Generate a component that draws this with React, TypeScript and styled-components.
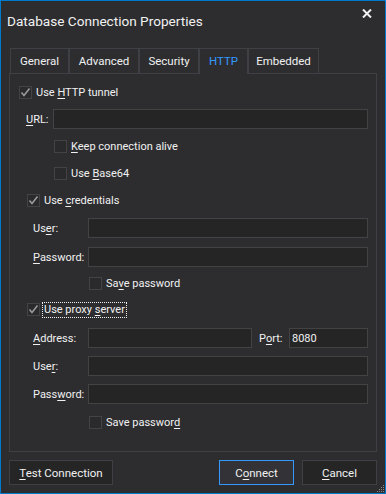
import React, { useState } from "react";
import styled, { createGlobalStyle } from "styled-components";

const GlobalStyle = createGlobalStyle`
  html, body {
    margin: 0;
    padding: 0;
    background: #2d2d30;
  }
  body {
    font-family: Roboto, "Noto Sans", sans-serif;
  }
`;

const Window = styled.div`
  position: relative;
  box-sizing: border-box;
  width: 386px;
  height: 494px;
  border: 1px solid #007acc;
  background: #2d2d30;
  color: #f1f1f1;
  font-size: 11px;
  display: flex;
  flex-direction: column;
`;

const TitleBar = styled.div`
  height: 40px;
  display: flex;
  justify-content: space-between;
  padding: 0 13px 0 6px;
`;

const Title = styled.span`
  font-size: 13.6px;
  line-height: 40px;
`;

const CloseButton = styled.div`
  margin-top: 8px;
  width: 10px;
  height: 9px;
  display: flex;
`;

const TabStrip = styled.div`
  display: flex;
  height: 25px;
  margin: 7px 8px 0;
  padding-left: 1px;
`;

const Tab = styled.div<{ $width: number; $active?: boolean }>`
  position: relative;
  z-index: 1;
  box-sizing: border-box;
  width: ${(p) => p.$width}px;
  height: ${(p) => (p.$active ? 26 : 25)}px;
  margin-bottom: ${(p) => (p.$active ? -1 : 0)}px;
  border: 1px solid #3f3f46;
  border-bottom: none;
  background: #2d2d30;
  color: ${(p) => (p.$active ? "#3399ff" : "#f1f1f1")};
  font-size: 11.5px;
  display: flex;
  align-items: center;
  justify-content: center;
  padding-bottom: ${(p) => (p.$active ? 1 : 0)}px;
  cursor: default;
`;

const Panel = styled.div`
  box-sizing: border-box;
  height: 379px;
  margin: 0 8px;
  border: 1px solid #3f3f46;
  padding: 12px 8px 0 9px;
  display: flex;
  flex-direction: column;
`;

const CheckRow = styled.label<{ $mt: number; $indent: number }>`
  display: flex;
  align-items: center;
  height: 13px;
  margin-top: ${(p) => p.$mt}px;
  margin-left: ${(p) => p.$indent}px;
  gap: 3px;
`;

const Box = styled.span`
  box-sizing: border-box;
  width: 13px;
  height: 13px;
  border: 1px solid #434346;
  background: #2a2a2c;
  display: flex;
  align-items: center;
  justify-content: center;
`;

const CheckText = styled.span<{ $focused?: boolean }>`
  line-height: 14px;
  padding: 0 1px;
  white-space: nowrap;
  outline: ${(p) => (p.$focused ? "1px dotted #f1f1f1" : "none")};
`;

const FieldRow = styled.div<{ $mt: number; $indent: number }>`
  display: flex;
  align-items: center;
  height: 20px;
  margin-top: ${(p) => p.$mt}px;
  margin-left: ${(p) => p.$indent}px;
`;

const FieldLabel = styled.span<{ $width: number }>`
  width: ${(p) => p.$width}px;
  flex-shrink: 0;
  white-space: nowrap;
`;

const Input = styled.input<{ $width?: number }>`
  box-sizing: border-box;
  height: 20px;
  ${(p) => (p.$width ? `width: ${p.$width}px; flex: none;` : "flex: 1; min-width: 0;")}
  background: #252526;
  border: 1px solid #434346;
  color: #f1f1f1;
  font-family: inherit;
  font-size: 11px;
  padding: 0 2px;
  margin: 0;
  outline: none;
`;

const Gap = styled.span<{ $width: number }>`
  width: ${(p) => p.$width}px;
  flex-shrink: 0;
`;

const Footer = styled.div`
  display: flex;
  gap: 8px;
  height: 25px;
  margin: 8px 8px 0;
`;

const Spacer = styled.div`
  flex: 1;
`;

const Button = styled.button<{ $width: number; $primary?: boolean }>`
  box-sizing: border-box;
  width: ${(p) => p.$width}px;
  height: 25px;
  background: ${(p) => (p.$primary ? "#333337" : "#252526")};
  border: 1px solid ${(p) => (p.$primary ? "#3399ff" : "#3f3f46")};
  color: #f1f1f1;
  font-family: inherit;
  font-size: 11.5px;
  padding: 0;
  cursor: pointer;
`;

const Grip = styled.svg`
  position: absolute;
  right: 0;
  bottom: 0;
`;

const U = styled.u`
  text-decoration: underline;
  text-underline-offset: 2px;
`;

const Check = ({ checked }: { checked: boolean }) => (
  <Box>
    {checked && (
      <svg width="11" height="11" viewBox="0 0 11 11">
        <polyline
          points="1.5,5.5 4,8.5 9.5,1.5"
          fill="none"
          stroke="#9a9a9a"
          strokeWidth="1.6"
        />
      </svg>
    )}
  </Box>
);

const tabs = [
  { name: "General", width: 59 },
  { name: "Advanced", width: 70 },
  { name: "Security", width: 60 },
  { name: "HTTP", width: 49 },
  { name: "Embedded", width: 71 },
];

export default function App() {
  const [active, setActive] = useState("HTTP");

  return (
    <>
      <GlobalStyle />
      <Window>
        <TitleBar>
          <Title>Database Connection Properties</Title>
          <CloseButton>
            <svg width="10" height="9" viewBox="0 0 10 9">
              <path d="M1 0.5 L9 8.5 M9 0.5 L1 8.5" stroke="#f1f1f1" strokeWidth="2" />
            </svg>
          </CloseButton>
        </TitleBar>

        <TabStrip>
          {tabs.map((t) => (
            <Tab
              key={t.name}
              $width={t.width}
              $active={active === t.name}
              onClick={() => setActive(t.name)}
            >
              {t.name}
            </Tab>
          ))}
        </TabStrip>

        <Panel>
          <CheckRow $mt={0} $indent={0}>
            <Check checked />
            <CheckText>
              Use <U>H</U>TTP tunnel
            </CheckText>
          </CheckRow>
          <FieldRow $mt={10} $indent={7}>
            <FieldLabel $width={27}>
              <U>U</U>RL:
            </FieldLabel>
            <Input />
          </FieldRow>
          <CheckRow $mt={11} $indent={35}>
            <Check checked={false} />
            <CheckText>
              <U>K</U>eep connection alive
            </CheckText>
          </CheckRow>
          <CheckRow $mt={14} $indent={35}>
            <Check checked={false} />
            <CheckText>
              Use <U>B</U>ase64
            </CheckText>
          </CheckRow>

          <CheckRow $mt={14} $indent={8}>
            <Check checked />
            <CheckText>
              Use <U>c</U>redentials
            </CheckText>
          </CheckRow>
          <FieldRow $mt={11} $indent={14}>
            <FieldLabel $width={55}>
              Us<U>e</U>r:
            </FieldLabel>
            <Input />
          </FieldRow>
          <FieldRow $mt={9} $indent={14}>
            <FieldLabel $width={55}>
              <U>P</U>assword:
            </FieldLabel>
            <Input type="password" />
          </FieldRow>
          <CheckRow $mt={10} $indent={70}>
            <Check checked={false} />
            <CheckText>
              Sa<U>v</U>e password
            </CheckText>
          </CheckRow>

          <CheckRow $mt={13} $indent={8}>
            <Check checked />
            <CheckText $focused>
              Use proxy <U>s</U>erver
            </CheckText>
          </CheckRow>
          <FieldRow $mt={12} $indent={14}>
            <FieldLabel $width={55}>
              <U>A</U>ddress:
            </FieldLabel>
            <Input $width={164} />
            <Gap $width={7} />
            <FieldLabel $width={30}>
              P<U>o</U>rt:
            </FieldLabel>
            <Input defaultValue="8080" />
          </FieldRow>
          <FieldRow $mt={8} $indent={14}>
            <FieldLabel $width={55}>
              Use<U>r</U>:
            </FieldLabel>
            <Input />
          </FieldRow>
          <FieldRow $mt={8} $indent={14}>
            <FieldLabel $width={55}>
              Pass<U>w</U>ord:
            </FieldLabel>
            <Input type="password" />
          </FieldRow>
          <CheckRow $mt={12} $indent={70}>
            <Check checked={false} />
            <CheckText>
              Save passwor<U>d</U>
            </CheckText>
          </CheckRow>
        </Panel>

        <Footer>
          <Button $width={104}>
            <U>T</U>est Connection
          </Button>
          <Spacer />
          <Button $width={75} $primary>
            C<U>o</U>nnect
          </Button>
          <Button $width={75}>
            <U>C</U>ancel
          </Button>
        </Footer>

        <Grip width="8" height="8" viewBox="0 0 8 8">
          {[
            [6, 0], [6, 2], [4, 2], [6, 4], [4, 4], [2, 4],
            [6, 6], [4, 6], [2, 6], [0, 6],
          ].map(([x, y]) => (
            <rect key={`${x}-${y}`} x={x} y={y} width="1" height="1" fill="#8a8a8a" />
          ))}
        </Grip>
      </Window>
    </>
  );
}
